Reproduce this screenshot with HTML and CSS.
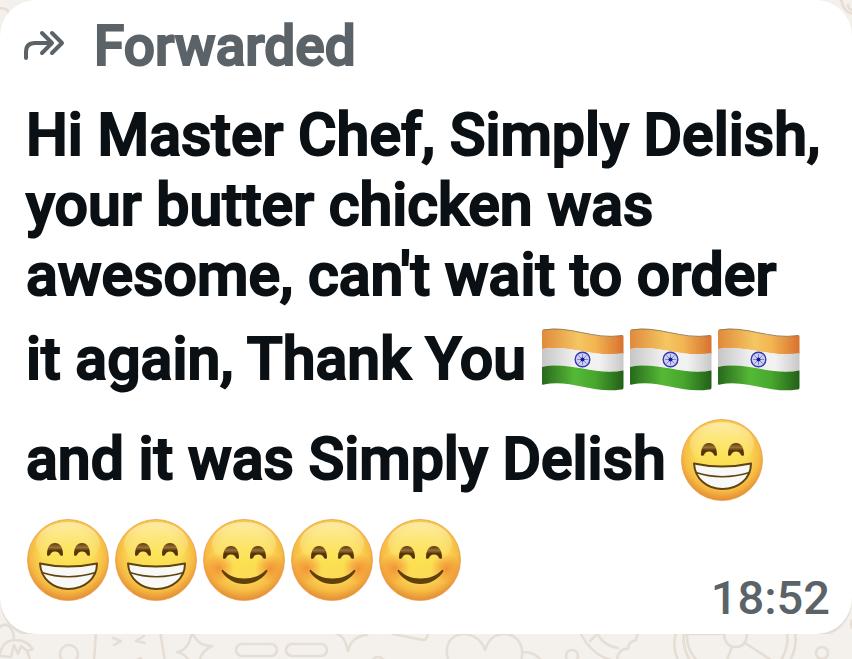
FILE: index.html
```
<!DOCTYPE html>
<html lang="en">
<head>
  <meta charset="utf-8">
  <meta name="viewport" content="width=device-width, initial-scale=1">
  <title>Chat</title>
  <link rel="stylesheet" href="styles.css">
</head>
<body>
  <!-- shared emoji shapes -->
  <svg class="defs" aria-hidden="true">
    <defs>
      <radialGradient id="skin" cx="50%" cy="42%" r="58%">
        <stop offset="0" stop-color="#fbe24c"/>
        <stop offset="0.55" stop-color="#fbdb55"/>
        <stop offset="0.8" stop-color="#f6bb44"/>
        <stop offset="1" stop-color="#e48b32"/>
      </radialGradient>
      <linearGradient id="shine" x1="0" y1="0" x2="0" y2="1">
        <stop offset="0" stop-color="#fff3c0" stop-opacity="0.75"/>
        <stop offset="1" stop-color="#fcee80" stop-opacity="0"/>
      </linearGradient>
      <radialGradient id="blush">
        <stop offset="0" stop-color="#f0782c" stop-opacity="0.7"/>
        <stop offset="1" stop-color="#f0782c" stop-opacity="0"/>
      </radialGradient>
      <linearGradient id="eye" x1="0" y1="0" x2="0" y2="1">
        <stop offset="0" stop-color="#5c3a0c"/>
        <stop offset="0.35" stop-color="#9a7035"/>
        <stop offset="0.6" stop-color="#553508"/>
        <stop offset="1" stop-color="#553508"/>
      </linearGradient>
      <linearGradient id="saffron">
        <stop offset="0" stop-color="#e08a3c"/>
        <stop offset="0.45" stop-color="#f5c662"/>
        <stop offset="0.65" stop-color="#f2b553"/>
        <stop offset="1" stop-color="#d8712f"/>
      </linearGradient>
      <linearGradient id="white">
        <stop offset="0" stop-color="#c6c6c6"/>
        <stop offset="0.4" stop-color="#f0f0f0"/>
        <stop offset="0.7" stop-color="#f2f2f2"/>
        <stop offset="1" stop-color="#c8c8c8"/>
      </linearGradient>
      <linearGradient id="green">
        <stop offset="0" stop-color="#28691c"/>
        <stop offset="0.4" stop-color="#55b936"/>
        <stop offset="0.65" stop-color="#48a82e"/>
        <stop offset="1" stop-color="#235f19"/>
      </linearGradient>

      <symbol id="face" viewBox="0 0 88 100">
        <circle cx="44" cy="50" r="40.5" fill="url(#skin)" stroke="#e8a050" stroke-width="0.8"/>
        <ellipse cx="44" cy="34" rx="32" ry="22" fill="url(#shine)"/>
      </symbol>
      <symbol id="eyes" viewBox="0 0 88 100">
        <path fill="url(#eye)" d="M23 46C23 38 26 34 31 34S39 38 39 46C39 47 36.500 47 36 46C35 44 34 42.500 31 42.500S27 44 26 46C25.500 47 23 47 23 46Z"/>
        <path fill="url(#eye)" d="M50 46C50 38 53 34 58 34S66 38 66 46C66 47 63.500 47 63 46C62 44 61 42.500 58 42.500S54 44 53 46C52.500 47 50 47 50 46Z"/>
      </symbol>
      <symbol id="grin" viewBox="0 0 88 100">
        <use href="#face"/>
        <use href="#eyes" y="-1"/>
        <path fill="#f8f8f6" stroke="#61430f" stroke-width="2" stroke-linejoin="round" d="M16 53.500C34 57.500 54 57.500 73 53.500C73 69 60 79 44.500 79S17 69 16 53.500Z"/>
        <path fill="none" stroke="#61430f" stroke-width="1.5" d="M18 62.500C34 68 55 68 71.500 62.500"/>
      </symbol>
      <symbol id="smile" viewBox="0 0 88 100">
        <use href="#face"/>
        <circle cx="19" cy="58" r="15" fill="url(#blush)"/>
        <circle cx="70" cy="58" r="15" fill="url(#blush)"/>
        <use href="#eyes" y="2"/>
        <path fill="#61400b" d="M23 60C28 65 35 68.500 44.500 68.500S61 65 66 60C67 59.500 68 60.500 67 62C62 69.500 54 74 44.500 74S27 69.500 22 62C21 60.500 22 59.500 23 60Z"/>
      </symbol>
      <symbol id="india" viewBox="0 0 88 100">
        <path fill="url(#saffron)" d="M3 21C3 20 4 20 5 19.500C31 15 54 30 82 25.500C84 25 84.500 25 84.500 27V44C56 48 30 34 3 39Z"/>
        <path fill="url(#white)" d="M3 39C30 34 56 48 84.500 43V61C56 65 30 51 3 57Z"/>
        <path fill="url(#green)" d="M3 57C30 51 56 66 84.500 60.500V77C84.500 79 84 79.500 82 79.500C54 84 31 69 5 74.500C3.500 75 3 75 3 73Z"/>
        <path fill="none" stroke="#80704c" stroke-width="0.8" d="M4 20C31 15 54 30 83 25.500"/>
        <circle cx="43.500" cy="49.500" r="7.300" fill="#cdd0f2" stroke="#3338a8" stroke-width="1.400"/>
        <path stroke="#5c62c4" stroke-width="0.7" d="M43.500 44V55M38 49.500H49M39.500 45.500L47.500 53.500M47.500 45.500L39.500 53.500"/>
        <circle cx="43.500" cy="49.500" r="2" fill="#15188e"/>
      </symbol>
    </defs>
  </svg>

  <!-- doodle wallpaper -->
  <svg class="wallpaper" viewBox="0 0 852 659" preserveAspectRatio="xMinYMax slice" aria-hidden="true">
    <g fill="none" stroke="#e6ded4" stroke-width="2.600" stroke-linecap="round" stroke-linejoin="round">
      <path d="M-2 9C3 7 7 9 9 13"/>
      <path d="M841 -2C842 8 847 13 854 14M854 10C850 10 848 8 848 5"/>
      <path d="M0 627C7 621 14 628 14 640M-1 657C1 645 7 640 15 640C24 640 28 643 33 649L27 651L31 662M1 656L11 657L14 645L18 654L21 646L27 651"/>
      <circle cx="69" cy="654" r="9"/>
      <path d="M96 630L94 662M160 630L165 662M113 638L121 641L114 645M144 636L136 641L145 643M137 660L141 658"/>
      <path d="M192 630C194 640 201 646 212 646C204 650 200 655 199 663M192 632C190 644 185 651 177 652C184 654 188 657 189 662"/>
      <rect x="236" y="644" width="41" height="12" rx="6"/>
      <rect x="286" y="644" width="41" height="12" rx="6"/>
      <path d="M337 634C344 636 346 643 348 651C350 642 355 636 367 635M393 634L423 640C427 640 428 637 428 632"/>
      <circle cx="378" cy="664" r="7"/>
      <path d="M449 662C443 646 450 635 463 634C473 634 482 640 485 650C488 640 495 634 504 634C518 634 525 646 521 662M523 652C534 652 538 657 543 662"/>
      <circle cx="572" cy="656" r="6"/>
      <path d="M581 634C590 652 604 660 620 662M590 641L599 632M597 633C602 643 610 647 618 648M617 662C617 654 621 648 628 649C628 644 631 641 636 640L638 632M676 632C673 644 674 652 679 662M684 632C682 644 686 654 691 662M687 632C686 646 691 654 698 662"/>
      <path d="M686 634L724 634M724 632C724 643 729 647 736 647S747 642 747 632M732 647L726 662M745 643L771 660M787 632C789 644 785 654 780 662M795 632C797 644 794 654 789 662"/>
      <circle cx="822" cy="653" r="6"/>
      <path d="M854 619C850 621 850 627 854 629"/>
    </g>
  </svg>

  <main class="message">
    <div class="forwarded">
      <svg class="arrow" width="46" height="40" viewBox="2 0 46 40" aria-hidden="true">
        <path d="M2 32V26C2 20 5 17 11 17H27M18 7L28 17L18 27M28 7L38 17L28 27"/>
      </svg>
      <span>Forwarded</span>
    </div>
    <p class="text">Hi Master Chef, Simply Delish, your butter chicken was awesome, can't wait to order it&nbsp;again, Thank You <svg class="emoji" role="img" aria-label="Flag of India"><use href="#india"/></svg><svg class="emoji" role="img" aria-label="Flag of India"><use href="#india"/></svg><svg class="emoji" role="img" aria-label="Flag of India"><use href="#india"/></svg> and it was Simply Delish <svg class="emoji" role="img" aria-label="Grinning face"><use href="#grin"/></svg><svg class="emoji" role="img" aria-label="Grinning face"><use href="#grin"/></svg><svg class="emoji" role="img" aria-label="Grinning face"><use href="#grin"/></svg><svg class="emoji" role="img" aria-label="Smiling face"><use href="#smile"/></svg><svg class="emoji" role="img" aria-label="Smiling face"><use href="#smile"/></svg><svg class="emoji" role="img" aria-label="Smiling face"><use href="#smile"/></svg></p>
    <time class="time" datetime="18:52">18:52</time>
  </main>
</body>
</html>
```
FILE: styles.css
```
body {
  margin: 0;
  background: #f4f0eb;
  font-family: Roboto, "Liberation Sans", sans-serif;
}
.defs {
  position: absolute;
  width: 0;
  height: 0;
}
.wallpaper {
  position: absolute;
  top: 0;
  left: 0;
  width: 100%;
  height: 100%;
  z-index: -1;
}
.message {
  display: flex;
  flex-direction: column;
  padding: 11px 22px 0 26px;
  background: #fff;
  border-radius: 36px;
  box-shadow: 0 3px 0 #e3dfd8;
}
.forwarded {
  display: flex;
  align-items: center;
  gap: 22px;
  color: #5b6368;
  font-size: 55px;
  font-weight: 500;
  line-height: 70px;
  -webkit-text-stroke: 2px;
}
.arrow {
  overflow: visible;
  fill: none;
  stroke: currentColor;
  stroke-width: 4;
  stroke-linecap: round;
  stroke-linejoin: round;
}
.text {
  margin: 19px 0 0;
  color: #0a1014;
  font-size: 59px;
  font-weight: 500;
  line-height: 70px;
  -webkit-text-stroke: 2px;
}
.emoji {
  width: 88px;
  height: 100px;
  margin: 0 2px 0 -2px;
  vertical-align: -31px;
}
.time {
  align-self: flex-end;
  margin-top: -44px;
  padding-bottom: 4px;
  color: #5b6368;
  font-size: 47px;
  font-weight: 500;
  line-height: 64px;
}
```
